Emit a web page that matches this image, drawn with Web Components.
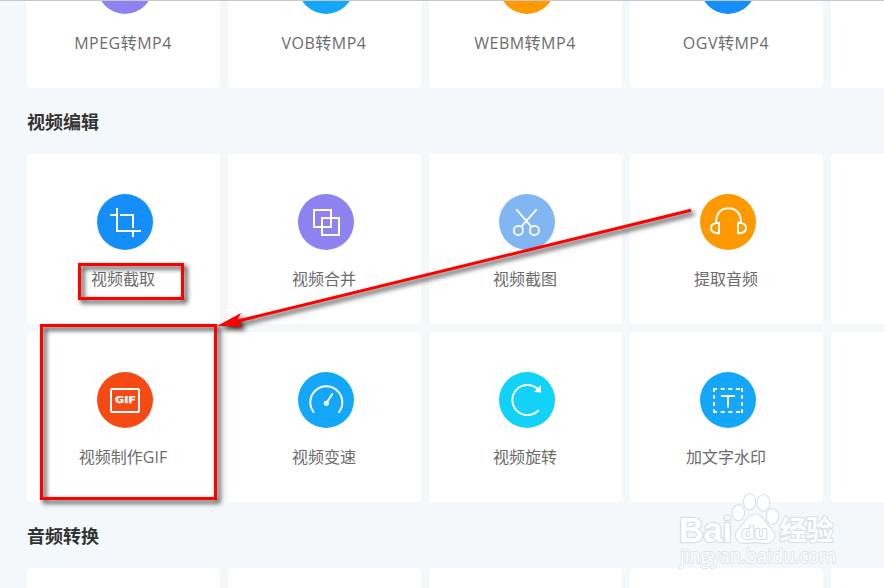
<!DOCTYPE html>
<html lang="zh-CN">
<head>
<meta charset="utf-8">
<title>视频编辑</title>
<style>
html,body{margin:0;height:588px;overflow:hidden;background:#f4f8fb}
body{font-family:"Open Sans","Noto Sans CJK SC",sans-serif}
.formats{letter-spacing:.5px}
</style>
</head>
<body>
<tool-page>
  <tool-grid class="formats">
    <tool-card color="#8d82f0">MPEG转MP4</tool-card>
    <tool-card color="#14a6f8">VOB转MP4</tool-card>
    <tool-card color="#ff9900">WEBM转MP4</tool-card>
    <tool-card color="#148ef8">OGV转MP4</tool-card>
    <tool-card></tool-card>
  </tool-grid>
  <section-title>视频编辑</section-title>
  <tool-grid>
    <tool-card color="#148ef8" icon="crop">视频截取</tool-card>
    <tool-card color="#8d82f0" icon="merge">视频合并</tool-card>
    <tool-card color="#82b6f3" icon="scissors">视频截图</tool-card>
    <tool-card color="#ff9900" icon="headphones">提取音频</tool-card>
    <tool-card></tool-card>
    <tool-card color="#f54a14" icon="gif">视频制作GIF</tool-card>
    <tool-card color="#14a6f8" icon="gauge">视频变速</tool-card>
    <tool-card color="#12d2f7" icon="rotate">视频旋转</tool-card>
    <tool-card color="#14a6f8" icon="text">加文字水印</tool-card>
    <tool-card></tool-card>
  </tool-grid>
  <section-title>音频转换</section-title>
  <tool-grid>
    <tool-card></tool-card><tool-card></tool-card><tool-card></tool-card><tool-card></tool-card><tool-card></tool-card>
  </tool-grid>
  <page-watermark slot="overlay"></page-watermark>
  <page-annotations slot="overlay"></page-annotations>
</tool-page>
<script>
const ICONS = {
  crop: '<path d="M20 14V37H44M13 21H19M23 21H36V34M36 38V43"/>',
  merge: '<rect x="16" y="16" width="17" height="17"/><rect x="24" y="24" width="17" height="17"/>',
  scissors: '<g stroke-linecap="round" stroke-width="1.8"><path d="M17.8 15.8L32 32.4M37.2 15.8L22.6 32.4"/><circle cx="19.4" cy="36.4" r="4.6"/><circle cx="35.4" cy="36.4" r="4.6"/></g>',
  headphones: '<path d="M16 28.7C16 19.5 21 14.2 28.5 14.2S41 19.5 41 28.7M19 28.7V39.3C14 39.3 11 37.3 11 34S14 28.7 19 28.7ZM38 28.7V39.3C43 39.3 46 37.3 46 34S43 28.7 38 28.7Z"/>',
  gif: '<rect x="14" y="17" width="28" height="23" rx="1"/><text x="18" y="31.2" textLength="21" lengthAdjust="spacingAndGlyphs" font-family="DejaVu Sans" font-weight="bold" font-size="8.4" fill="#fff" stroke="#fff" stroke-width=".25">GIF</text>',
  gauge: '<path stroke-linecap="round" d="M15.6 40A16 16 0 1 1 41 40M28.3 31.3L34.3 22"/><circle cx="28.3" cy="31.3" r="2.6" fill="#fff" stroke="none"/>',
  rotate: '<path stroke-linecap="round" d="M39 38.8A15.1 15.1 0 1 1 39 17.2"/><path d="M35 20L42 13V20.5Z" fill="#fff" stroke="none"/>',
  text: '<path stroke-dasharray="4 3.7 4 3.6 4 3.6 4 3.1" d="M13 17H43M13 40H43"/><path stroke-dasharray="4 3" d="M14 16V41M42 16V41"/><path d="M21 24H35M28 24V35.5"/>'
};
function define(name, markup) {
  customElements.define(name, class extends HTMLElement {
    constructor() {
      super();
      this.attachShadow({mode: 'open'}).innerHTML = markup;
    }
  });
}
define('tool-page', `<style>
:host{display:block;position:relative;width:884px;height:588px;box-sizing:border-box;overflow:hidden;background:#f4f8fb;border-top:1px solid #c8c8c8}
main{margin:-83px 0 0 27px;display:flex;flex-direction:column}
</style><main><slot></slot></main><slot name="overlay"></slot>`);
define('tool-grid', `<style>
:host{display:grid;grid-template-columns:repeat(5,193px);grid-auto-rows:170px;gap:8px}
</style><slot></slot>`);
define('section-title', `<style>
:host{display:block;box-sizing:border-box;height:66px;padding-top:2px;font-size:18px;font-weight:700;line-height:64px;color:#333}
</style><slot></slot>`);
class ToolCard extends HTMLElement {
  constructor() {
    super();
    const color = this.getAttribute('color');
    this.attachShadow({mode: 'open'}).innerHTML = `<style>
:host{display:flex;flex-direction:column;align-items:center;box-sizing:border-box;background:#fff;border-radius:4px;padding-top:40px;color:#6c6c6c;font-size:16px}
.disc{width:56px;height:56px;border-radius:50%;margin-left:3px;background:${color};flex:none}
svg{display:block;fill:none;stroke:#fff;stroke-width:2}
.label{margin-top:17px;line-height:24px;white-space:nowrap;font-weight:400;padding-right:1px}
</style>` + (color ? `<div class="disc"><svg width="56" height="56" viewBox="0 0 56 56">${ICONS[this.getAttribute('icon')] || ''}</svg></div><div class="label"><slot></slot></div>` : '');
  }
}
customElements.define('tool-card', ToolCard);
define('page-watermark', `<style>
:host{position:absolute;left:0;top:-1px;width:884px;height:588px}
svg{display:block;fill:#fdfeff;stroke:#dcdfe2;stroke-width:2.2;paint-order:stroke;stroke-linejoin:round}
</style><svg width="884" height="588" viewBox="0 0 884 588">
<text x="679" y="542" font-family="Liberation Sans" font-weight="bold" font-size="35" textLength="53" lengthAdjust="spacingAndGlyphs" style="fill:#fdfeff;stroke-width:2.6">Bai</text>
<ellipse cx="738.3" cy="512.7" rx="5.7" ry="7.5"/><ellipse cx="749.6" cy="501.7" rx="5.6" ry="7.7"/><ellipse cx="763.4" cy="502.7" rx="5.8" ry="7.7"/><ellipse cx="772.4" cy="516.5" rx="5.7" ry="7.5"/>
<path d="M755 514.6C762 514.6 763 521 768.5 526C773 530 775 533 774.2 537C773 543 767 543.2 762 542.6C757 541.8 753 541.8 748.5 542.6C742 543.5 737 542.5 736.2 537C735.6 532 738 529.5 742 526C747 521.5 748 514.6 755 514.6Z"/>
<text x="741.5" y="539.3" font-family="Liberation Sans" font-weight="bold" font-size="19" textLength="26" lengthAdjust="spacingAndGlyphs">du</text>
<text x="779.5" y="540.3" font-family="Noto Sans CJK SC" font-weight="bold" font-size="27.3" textLength="54">经验</text>
<text x="680" y="563.3" font-family="Open Sans" font-size="19.5" textLength="156" lengthAdjust="spacingAndGlyphs" style="stroke-width:1.6">jingyan.baidu.com</text>
</svg>`);
define('page-annotations', `<style>
:host{position:absolute;left:0;top:-1px;width:884px;height:588px}
svg{display:block;filter:drop-shadow(3px 3px 2.5px rgba(0,0,0,.85))}
</style><svg width="884" height="588" viewBox="0 0 884 588" fill="none" stroke="#f00" stroke-width="3">
<rect x="79.5" y="264.5" width="103" height="34"/>
<rect x="41.5" y="325.5" width="174" height="173"/>
<path d="M236 321.5L691 210.3"/>
<path d="M217 326L241 313L237 321L243 327Z" fill="#f00" stroke="none"/>
</svg>`);
</script>
</body>
</html>
